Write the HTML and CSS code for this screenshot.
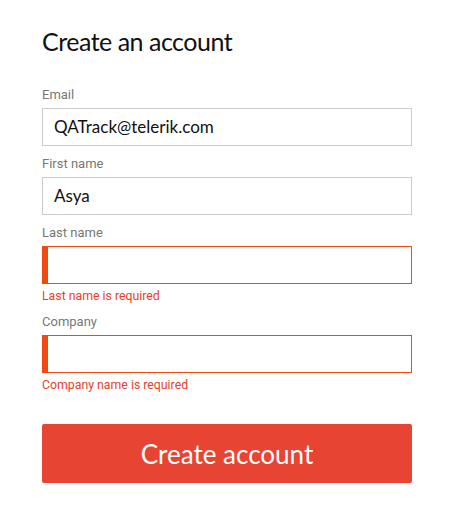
FILE: index.html
```html
<!DOCTYPE html>
<html>
<head>
<meta charset="utf-8">
<link rel="stylesheet" href="styles.css">
</head>
<body>
<form class="form">
  <h1 class="title">Create an account</h1>
  <div class="field">
    <label class="label">Email</label>
    <div class="input">QATrack@telerik.com</div>
  </div>
  <div class="field">
    <label class="label">First name</label>
    <div class="input">Asya</div>
  </div>
  <div class="field">
    <label class="label">Last name</label>
    <div class="input input-error"></div>
    <div class="error">Last name is required</div>
  </div>
  <div class="field">
    <label class="label">Company</label>
    <div class="input input-error"></div>
    <div class="error">Company name is required</div>
  </div>
  <button type="button" class="button">Create account</button>
</form>
</body>
</html>
```
FILE: styles.css
```css
html, body {
  margin: 0;
  padding: 0;
  background: #fff;
}
.form {
  width: 370px;
  padding: 25px 0 0 42px;
  font-family: Lato, sans-serif;
  display: flex;
  flex-direction: column;
}
.title {
  margin: 0 0 28px 0;
  font-size: 25px;
  line-height: 32px;
  font-weight: 400;
  color: #111;
  letter-spacing: -0.5px;
}
.field {
  display: flex;
  flex-direction: column;
  margin-bottom: 8px;
}
.label {
  font-family: Roboto, sans-serif;
  font-size: 13px;
  line-height: 20px;
  color: #777777;
  margin-bottom: 3px;
}
.input {
  box-sizing: border-box;
  height: 38px;
  border: 1px solid #cccccc;
  padding: 0 11px;
  font-size: 17px;
  line-height: 36px;
  color: #111;
}
.input-error {
  border-color: #ee4a12;
  border-left: 6px solid #ee4a12;
}
.error {
  font-family: Roboto, sans-serif;
  font-size: 12.3px;
  line-height: 16px;
  margin-top: 4px;
  color: #e8402c;
}
.button {
  margin-top: 23px;
  height: 59px;
  border: none;
  border-radius: 2px;
  background: #e84433;
  color: #fff;
  font-family: Lato, sans-serif;
  font-size: 26px;
  padding: 0;
}
```
